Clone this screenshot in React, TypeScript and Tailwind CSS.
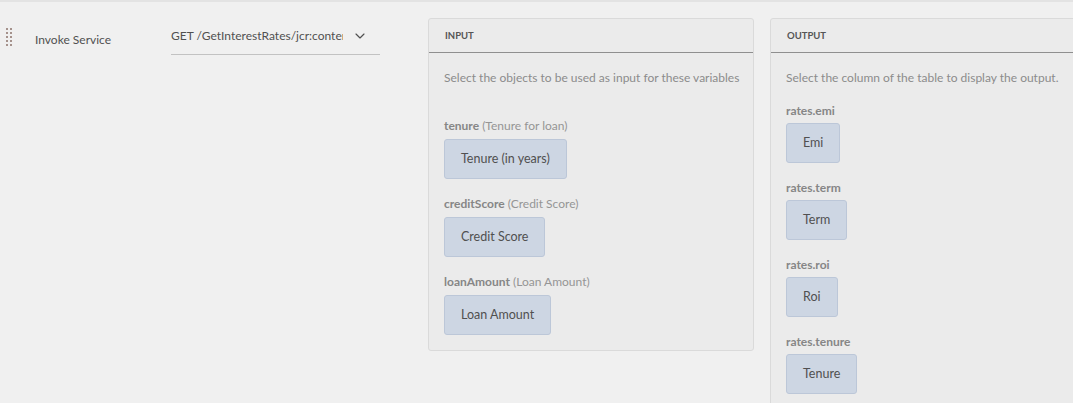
import { ChevronDown } from "lucide-react";

const inputFields = [
  { name: "tenure", title: "Tenure for loan", value: "Tenure (in years)" },
  { name: "creditScore", title: "Credit Score", value: "Credit Score" },
  { name: "loanAmount", title: "Loan Amount", value: "Loan Amount" },
];

const outputFields = [
  { name: "rates.emi", value: "Emi" },
  { name: "rates.term", value: "Term" },
  { name: "rates.roi", value: "Roi" },
  { name: "rates.tenure", value: "Tenure" },
];

const DragHandle = () => (
  <svg width="8" height="20" viewBox="0 0 8 20" className="shrink-0">
    {[0, 4, 8, 12, 16].map((y) => (
      <g key={y} fill="#a5928c">
        <rect x="1" y={y + 1} width="2" height="2" />
        <rect x="5" y={y + 1} width="2" height="2" />
      </g>
    ))}
  </svg>
);

const FieldButton = ({ text }: { text: string }) => (
  <div className="h-10 inline-flex items-center px-4 rounded-[3px] bg-[#cdd6e3] border border-[#bcc7d8] text-[12.5px] text-[#505050]">
    {text}
  </div>
);

const Panel = ({
  title,
  children,
  className,
}: {
  title: string;
  children: React.ReactNode;
  className: string;
}) => (
  <div className={`bg-[#ebebeb] border border-[#dadada] rounded-[3px] shrink-0 ${className}`}>
    <div className="h-[34px] flex items-center pl-4 pt-[2px] border-b border-[#8f8f8f] text-[9.5px] font-bold text-[#555555]">
      {title}
    </div>
    {children}
  </div>
);

export default function App() {
  return (
    <div
      className="w-[1073px] h-[403px] overflow-hidden bg-[#f0f0f0] border-t-2 border-[#e3e3e3] text-[#505050]"
      style={{ fontFamily: "Lato, 'Open Sans', sans-serif" }}
    >
      <div className="flex items-start pt-4">
        <div className="flex items-start w-[171px] shrink-0 pl-[5px]">
          <div className="pt-[9px]">
            <DragHandle />
          </div>
          <span className="ml-[22px] pt-[14px] text-[12px] leading-4">Invoke Service</span>
        </div>
        <div className="w-[209px] h-[37px] shrink-0 flex items-center justify-between border-b border-[#c2c2c2] pr-3">
          <span className="w-[172px] overflow-hidden whitespace-nowrap text-[12px]">
            GET /GetInterestRates/jcr:content/guideContainer
          </span>
          <ChevronDown size={16} strokeWidth={1.75} className="text-[#505050]" />
        </div>
        <Panel title="INPUT" className="ml-12 w-[326px]">
          <div className="pl-[15px] pr-4 pt-[17px]">
            <p className="text-[12px] leading-4 text-[#8c8c8c] mb-[32px] whitespace-nowrap">
              Select the objects to be used as input for these variables
            </p>
            {inputFields.map((f) => (
              <div key={f.name} className="mb-[17px] last:mb-[15px]">
                <div className="text-[12px] leading-4 mb-[5px] text-[#959595]">
                  <span className="font-bold text-[#868686]">{f.name}</span> ({f.title})
                </div>
                <FieldButton text={f.value} />
              </div>
            ))}
          </div>
        </Panel>
        <Panel title="OUTPUT" className="ml-4 w-[320px]">
          <div className="pl-[15px] pr-4 pt-[17px]">
            <p className="text-[12px] leading-4 text-[#8c8c8c] mb-[17px] whitespace-nowrap">
              Select the column of the table to display the output.
            </p>
            {outputFields.map((f) => (
              <div key={f.name} className="mb-[17px]">
                <div className="text-[12px] leading-4 mb-[4px] font-bold text-[#868686]">
                  {f.name}
                </div>
                <FieldButton text={f.value} />
              </div>
            ))}
          </div>
        </Panel>
      </div>
    </div>
  );
}
